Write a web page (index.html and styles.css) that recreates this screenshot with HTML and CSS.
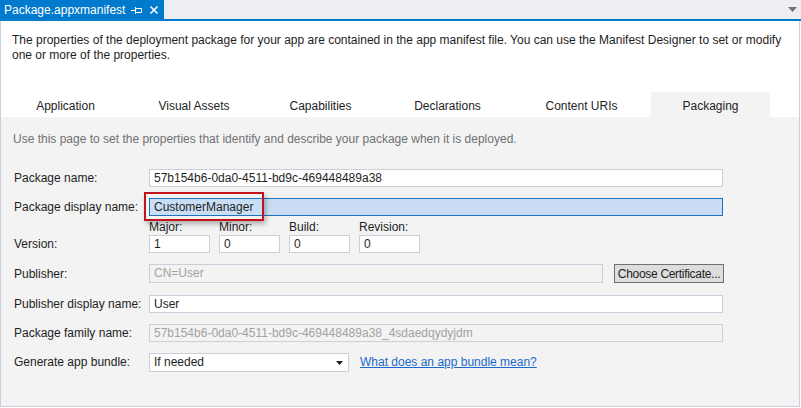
FILE: index.html
```html
<!DOCTYPE html>
<html>
<head>
<meta charset="utf-8">
<link rel="stylesheet" href="styles.css">
</head>
<body>
<div class="window">
  <div class="tabbar">
    <div class="doc-tab">
      <span class="doc-title">Package.appxmanifest</span>
      <svg class="pin" width="12" height="10" viewBox="0 0 12 10"><path d="M0 5.5H4M4.5 2V9M4.5 3.5H10.5V7.5H4.5" fill="none" stroke="#fff" stroke-width="1"/></svg>
      <svg class="close" width="10" height="10" viewBox="0 0 10 10"><path d="M1.5 1.5L8.5 8.5M8.5 1.5L1.5 8.5" stroke="#fff" stroke-width="1.6"/></svg>
    </div>
    <div class="tabbar-fill"></div>
    <svg class="overflow" width="9" height="5" viewBox="0 0 9 5"><path d="M0 0H9L4.5 5Z" fill="#717171"/></svg>
  </div>
  <div class="accent"></div>
  <div class="panel">
    <p class="intro">The properties of the deployment package for your app are contained in the app manifest file. You can use the Manifest Designer to set or modify one or more of the properties.</p>
    <div class="tabs">
      <div class="tab t-app">Application</div>
      <div class="tab t-vis">Visual Assets</div>
      <div class="tab t-cap">Capabilities</div>
      <div class="tab t-dec">Declarations</div>
      <div class="tab t-uri">Content URIs</div>
      <div class="tab t-pkg active">Packaging</div>
    </div>
    <div class="page">
      <p class="hint">Use this page to set the properties that identify and describe your package when it is deployed.</p>
      <div class="form">
        <div class="row">
          <label class="label">Package name:</label>
          <div class="field wide">57b154b6-0da0-4511-bd9c-469448489a38</div>
        </div>
        <div class="row">
          <label class="label">Package display name:</label>
          <div class="field wide selected">CustomerManager
            <div class="callout"></div>
          </div>
        </div>
        <div class="row version-row">
          <label class="label">Version:</label>
          <div class="version">
            <div class="vpart"><span class="vlabel">Major:</span><div class="field small">1</div></div>
            <div class="vpart"><span class="vlabel">Minor:</span><div class="field small">0</div></div>
            <div class="vpart"><span class="vlabel">Build:</span><div class="field small">0</div></div>
            <div class="vpart"><span class="vlabel">Revision:</span><div class="field small">0</div></div>
          </div>
        </div>
        <div class="row tall">
          <label class="label">Publisher:</label>
          <div class="field publisher disabled">CN=User</div>
          <button class="btn">Choose Certificate...</button>
        </div>
        <div class="row">
          <label class="label">Publisher display name:</label>
          <div class="field wide">User</div>
        </div>
        <div class="row">
          <label class="label">Package family name:</label>
          <div class="field wide disabled">57b154b6-0da0-4511-bd9c-469448489a38_4sdaedqydyjdm</div>
        </div>
        <div class="row">
          <label class="label">Generate app bundle:</label>
          <div class="field select">If needed
            <svg class="caret" width="7" height="4" viewBox="0 0 7 4"><path d="M0 0H7L3.5 4Z" fill="#1e1e1e"/></svg>
          </div>
          <a class="link" href="#">What does an app bundle mean?</a>
        </div>
      </div>
    </div>
  </div>
</div>
</body>
</html>
```
FILE: styles.css
```css
html, body {
  margin: 0;
  padding: 0;
  background: #ffffff;
}
body {
  width: 801px;
  height: 408px;
  overflow: hidden;
  font-family: "Liberation Sans", Arial, sans-serif;
  font-size: 12px;
  color: #1e1e1e;
}
.tabbar {
  display: flex;
  align-items: center;
  height: 19px;
  background: #eeeef2;
}
.doc-tab {
  display: flex;
  align-items: center;
  width: 164px;
  height: 19px;
  background: #007acc;
  color: #fff;
  box-sizing: border-box;
  padding-left: 4px;
}
.doc-title {
  font-size: 12px;
  width: 127px;
}
.pin { margin-top: 1px; }
.close { margin-left: 6px; }
.tabbar-fill { flex: 1; }
.overflow { margin-right: 4px; }
.accent {
  height: 2px;
  background: #007acc;
}
.panel {
  height: 386px;
  border: 1px solid #cccedb;
  border-top: none;
  box-sizing: border-box;
  display: flex;
  flex-direction: column;
  width: 800px;
}
.intro {
  margin: 0;
  padding: 12px 11px 0 11px;
  line-height: 15px;
  height: 59px;
}
.tabs {
  display: flex;
  height: 25px;
  background: #fff;
}
.tab {
  display: flex;
  align-items: center;
  justify-content: center;
  padding-top: 2px;
  box-sizing: border-box;
}
.t-app { width: 129px; }
.t-vis { width: 128px; }
.t-cap { width: 125px; }
.t-dec { width: 129px; }
.t-uri { width: 139px; }
.t-pkg { width: 119px; }
.tab.active { background: #f3f3f3; }
.page {
  flex: 1;
  background: #f3f3f3;
  padding: 15px 0 0 12px;
}
.hint {
  margin: 0;
  line-height: 15px;
  color: #717171;
}
.form {
  display: flex;
  flex-direction: column;
  gap: 11px;
  margin-top: 22px;
}
.row {
  display: flex;
  align-items: center;
  height: 18px;
}
.row.tall {
  height: 19px;
  margin-bottom: 1px;
}
.label {
  width: 135px;
  padding-left: 1px;
}
.field {
  position: relative;
  height: 18px;
  box-sizing: border-box;
  border: 1px solid #cccedb;
  background: #fff;
  padding: 0 0 0 4px;
  line-height: 16px;
  white-space: nowrap;
}
.field.wide { width: 574px; }
.field.selected {
  background: #c9def5;
  border-color: #1c75bc;
}
.field.disabled {
  background: #f3f3f3;
  color: #a2a2a2;
}
.field.publisher {
  width: 454px;
  height: 19px;
  line-height: 17px;
}
.callout {
  position: absolute;
  left: -6px;
  top: -7px;
  width: 120px;
  height: 29px;
  box-sizing: border-box;
  border: 2px solid #c0131e;
  box-shadow: 2px 3px 5px rgba(0, 0, 0, 0.28);
}
.btn {
  margin-left: 11px;
  width: 110px;
  height: 19px;
  box-sizing: border-box;
  border: 1px solid #707070;
  background: #dddddd;
  font-family: inherit;
  font-size: 12px;
  letter-spacing: -0.3px;
  white-space: nowrap;
  color: #1e1e1e;
  padding: 0;
}
.version-row {
  height: 33px;
  margin-top: -7px;
  align-items: flex-end;
}
.version-row .label {
  align-self: flex-end;
  line-height: 18px;
}
.version {
  display: flex;
  gap: 9px;
}
.vpart {
  display: flex;
  flex-direction: column;
}
.vlabel {
  line-height: 15px;
  height: 15px;
}
.field.small { width: 61px; }
.field.select {
  width: 200px;
  height: 19px;
  line-height: 17px;
}
.caret {
  position: absolute;
  right: 5px;
  top: 7px;
}
.link {
  margin-left: 11px;
  color: #1b6ac9;
  text-decoration: underline;
}
```
